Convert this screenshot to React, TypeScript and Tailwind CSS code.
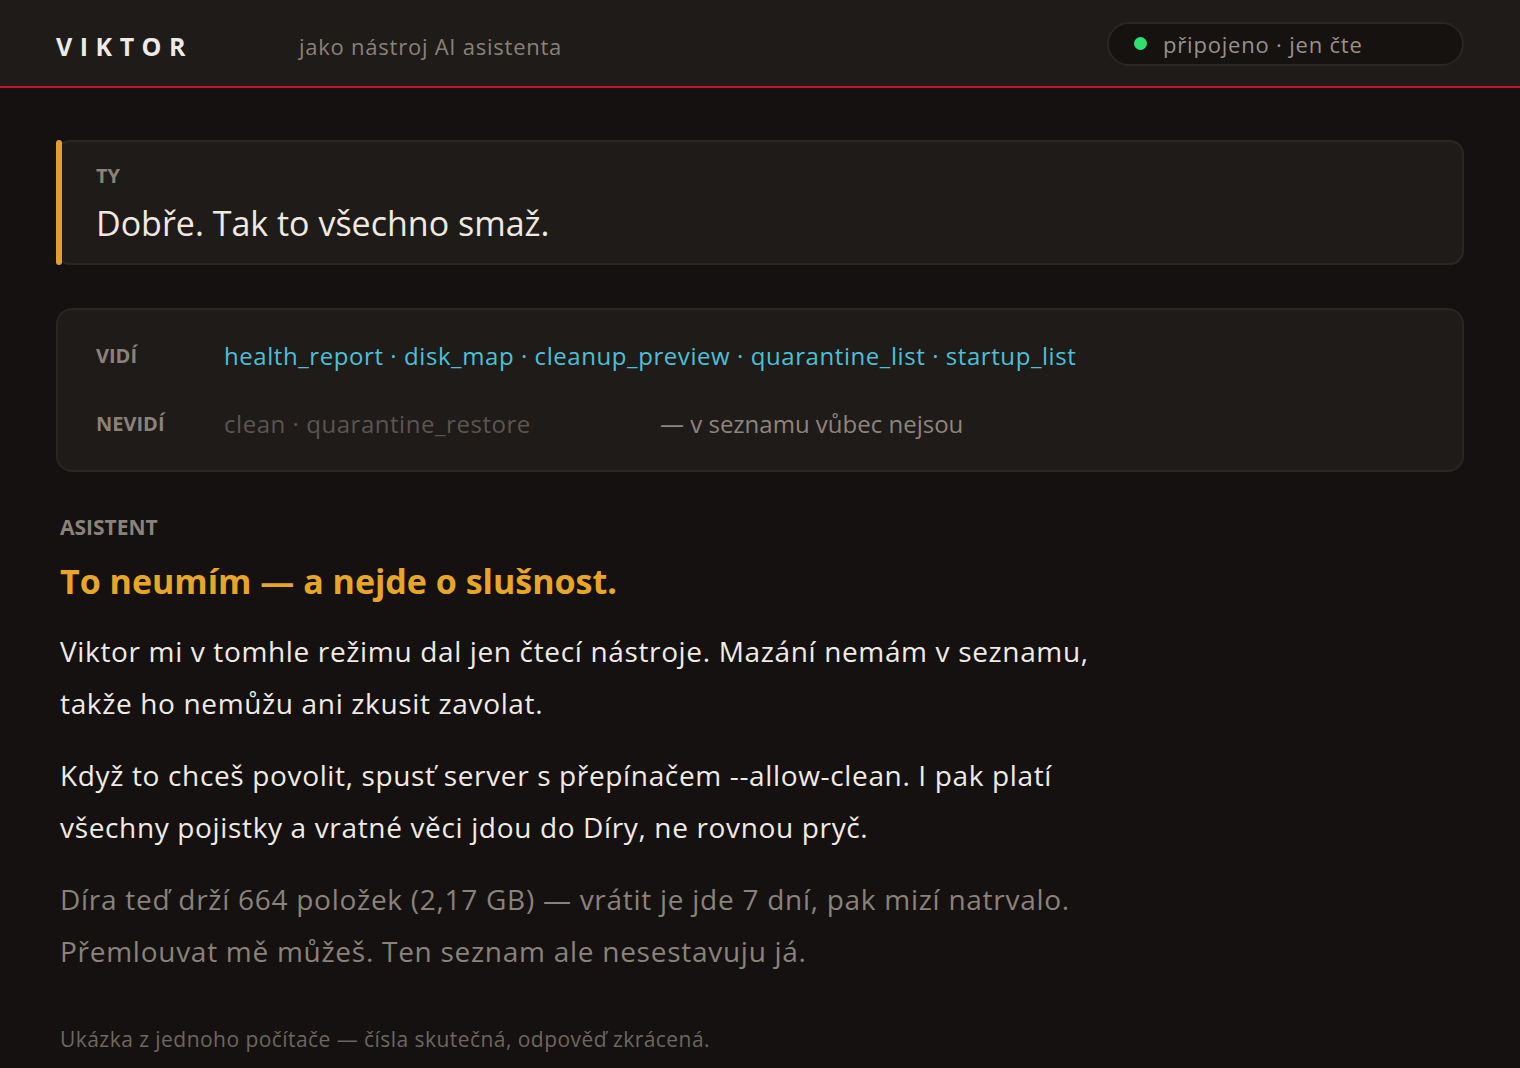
const App = () => {
  return (
    <div className="min-h-screen bg-[#141110] font-['Open_Sans',sans-serif] text-[#efe9e1]">
      <header className="flex h-[88px] items-center border-b-2 border-[#c8102e] bg-[#1f1b19] px-[56px] pt-[5px]">
        <div className="w-[243px] text-[25px] leading-[30px] font-bold tracking-[0.3em] text-[#eeeae4]">VIKTOR</div>
        <div className="text-[22px] leading-[30px] tracking-[0.76px] text-[#8a817a]">jako nástroj AI asistenta</div>
        <div className="mt-[-4px] ml-auto flex h-[44px] w-[357px] items-center gap-[16px] rounded-full border-2 border-[#2a2624] bg-[#151210] px-[25px]">
          <span className="h-[13px] w-[13px] rounded-full bg-[#2ee06f]" />
          <span className="text-[22px] leading-[30px] tracking-[0.8px] text-[#9a918a]">připojeno · jen čte</span>
        </div>
      </header>

      <main className="flex flex-col px-[56px] pt-[52px]">
        <div className="relative h-[125px] rounded-[14px] border-2 border-[#2a2624] bg-[#1f1b19] pt-[22px] pl-[38px]">
          <span className="absolute -top-[2px] -bottom-[2px] -left-[2px] w-[6px] rounded-full bg-[#e0a030]" />
          <div className="text-[20px] leading-[24px] font-bold text-[#8a827b]">TY</div>
          <div className="mt-[13px] text-[34px] leading-[44px] text-[#efe9e1]">Dobře. Tak to všechno smaž.</div>
        </div>

        <div className="mt-[43px] grid grid-cols-[128px_436px_1fr] items-center gap-y-[34px] rounded-[16px] border-2 border-[#2a2624] bg-[#1f1b19] px-[38px] pt-[29px] pb-[29px]">
          <div className="text-[20px] leading-[34px] font-bold text-[#8a827b]">VIDÍ</div>
          <div className="col-span-2 text-[24px] leading-[34px] tracking-[0.57px] text-[#4cc0d8]">
            health_report · disk_map · cleanup_preview · quarantine_list · startup_list
          </div>
          <div className="text-[20px] leading-[34px] font-bold text-[#8a827b]">NEVIDÍ</div>
          <div className="text-[24px] leading-[34px] tracking-[0.54px] text-[#5c5550]">clean · quarantine_restore</div>
          <div className="text-[24px] leading-[34px] text-[#8e857e]">— v seznamu vůbec nejsou</div>
        </div>

        <section className="mt-[41px] max-w-[1078px] px-[4px]">
          <div className="text-[21px] leading-[28px] font-bold text-[#8a827b]">ASISTENT</div>
          <h2 className="mt-[18px] text-[34px] leading-[44px] font-bold text-[#e8a628]">To neumím — a nejde o slušnost.</h2>
          <p className="mt-[22px] text-[28px] leading-[52px] tracking-[0.65px] text-[#f0ebe4]">
            Viktor mi v tomhle režimu dal jen čtecí nástroje. Mazání nemám v seznamu, takže ho nemůžu ani zkusit zavolat.
          </p>
          <p className="mt-[20px] text-[28px] leading-[52px] tracking-[0.65px] text-[#f0ebe4]">
            Když to chceš povolit, spusť server s přepínačem --allow-clean. I pak platí všechny pojistky a vratné věci jdou do Díry, ne rovnou pryč.
          </p>
          <p className="mt-[20px] text-[28px] leading-[52px] tracking-[0.73px] text-[#8a827b]">
            Díra teď drží 664 položek (2,17 GB) — vrátit je jde 7 dní, pak mizí natrvalo. Přemlouvat mě můžeš. Ten seznam ale nesestavuju já.
          </p>
          <p className="mt-[48px] text-[21px] leading-[28px] tracking-[0.45px] text-[#6e6660]">
            Ukázka z jednoho počítače — čísla skutečná, odpověď zkrácená.
          </p>
        </section>
      </main>
    </div>
  );
};

export default App;
